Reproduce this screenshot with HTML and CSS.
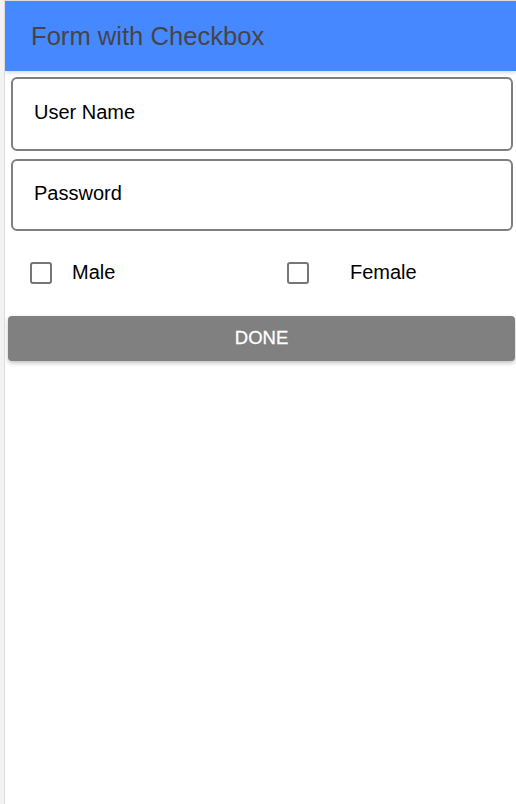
FILE: index.html
```html
<!DOCTYPE html>
<html>
<head>
<meta charset="utf-8">
<link rel="stylesheet" href="styles.css">
</head>
<body>
<div class="page">
  <header class="appbar">Form with Checkbox</header>
  <div class="field field-first">User Name</div>
  <div class="field field-second">Password</div>
  <div class="checks">
    <span class="box"></span>
    <span class="label">Male</span>
    <span class="box"></span>
    <span class="label">Female</span>
  </div>
  <button class="done">DONE</button>
</div>
</body>
</html>
```
FILE: styles.css
```css
html, body {
  margin: 0;
  padding: 0;
  background: #f2f2f2;
  font-family: "Liberation Sans", Arial, sans-serif;
}
.page {
  margin-left: 4px;
  border-left: 1px solid #dcdcdc;
  border-top: 1px solid #dcdcdc;
  background: #fff;
  min-height: calc(100vh - 1px);
  overflow: hidden;
}
.appbar {
  height: 70px;
  background: #4688ff;
  color: #454545;
  font-size: 25.6px;
  display: flex;
  align-items: center;
  padding-left: 26px;
  padding-top: 1px;
  box-sizing: border-box;
  box-shadow: 0 2px 4px rgba(0, 0, 0, 0.14);
  position: relative;
}
.field {
  box-sizing: border-box;
  margin-left: 6px;
  width: 502px;
  border: 2px solid #7f7f7f;
  border-radius: 6px;
  display: flex;
  align-items: center;
  padding-left: 21px;
  padding-bottom: 3px;
  font-size: 20px;
  color: #000;
}
.field-first {
  margin-top: 6px;
  height: 74px;
}
.field-second {
  margin-top: 8px;
  height: 72px;
}
.checks {
  display: grid;
  grid-template-columns: 42px 215px 63px 1fr;
  align-items: center;
  padding-left: 25px;
  margin-top: 30px;
  height: 22px;
}
.box {
  box-sizing: border-box;
  width: 22px;
  height: 22px;
  border: 2px solid #767676;
  border-radius: 3px;
}
.label {
  font-size: 20px;
  color: #000;
}
.done {
  display: block;
  box-sizing: border-box;
  margin: 33px 0 0 3px;
  width: 507px;
  height: 45px;
  border: none;
  border-radius: 4px;
  background: #808080;
  color: #fff;
  font-family: "Liberation Sans", Arial, sans-serif;
  font-size: 18.5px;
  -webkit-text-stroke: 0.3px #fff;
  box-shadow: 0 2px 4px rgba(0, 0, 0, 0.25);
  padding: 0 0 2px 0;
}
```
